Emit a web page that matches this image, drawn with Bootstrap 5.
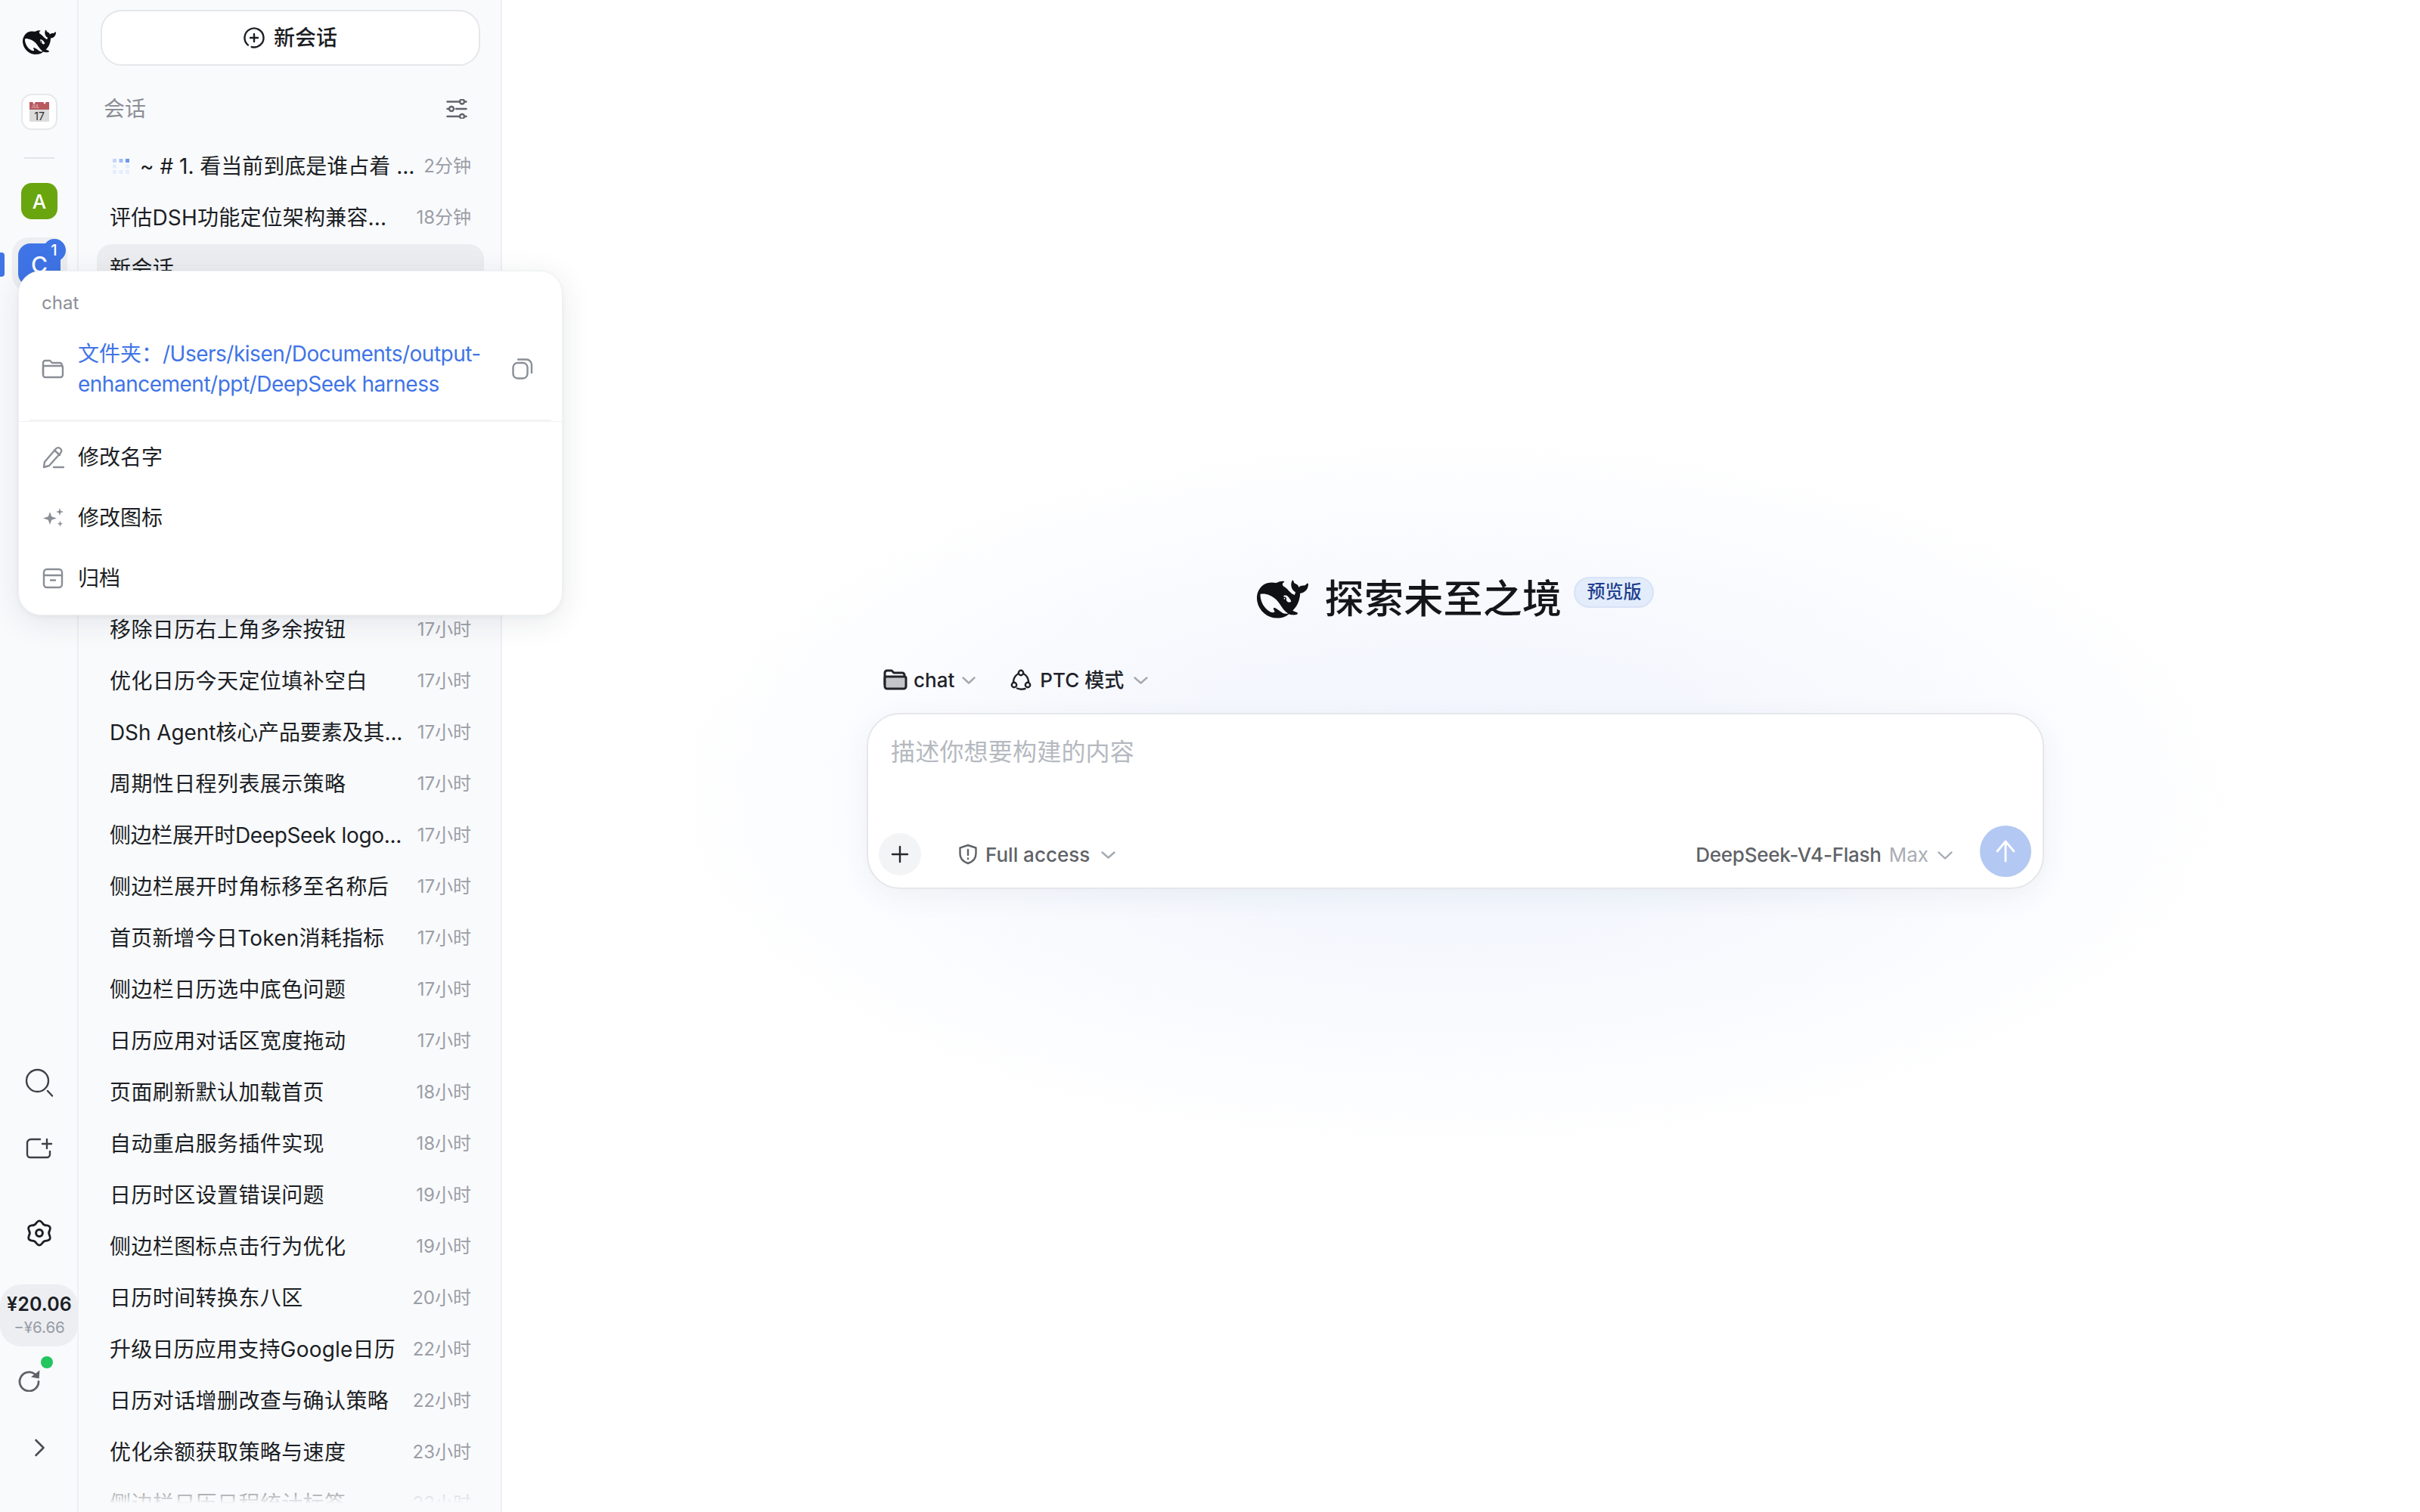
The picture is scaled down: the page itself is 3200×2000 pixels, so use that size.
<!DOCTYPE html>
<html lang="zh-CN">
<head>
<meta charset="utf-8">
<title>DeepSeek</title>
<link href="https://cdn.jsdelivr.net/npm/bootstrap@5.3.0/dist/css/bootstrap.min.css" rel="stylesheet">
<style>
html,body{height:100%;margin:0;overflow:hidden;background:#fff;}
body{font-family:Inter,"Noto Sans CJK SC",sans-serif;color:#1b1e24;font-size:28px;}
.app{height:2000px;width:3200px;position:relative;}
svg{display:block;flex:none;}
.ic{fill:none;stroke:currentColor;stroke-width:2.4;stroke-linecap:round;stroke-linejoin:round;}

/* rail */
.rail{width:104px;flex:none;background:#f9fafc;border-right:2px solid #eef0f3;padding:34px 0 73px 2px;}
.rail-cal{width:48px;height:48px;margin-top:46px;background:#fff;border:2px solid #e7e8ea;border-radius:14px;}
.rail-sep{width:40px;height:2px;margin-top:36px;background:#e4e5e8;}
.tile{width:48px;height:48px;border-radius:14px;color:#fff;font-weight:500;font-size:26px;}
.tile-a{margin-top:32px;background:#69a50f;}
.tile-c{width:56px;height:56px;background:#3f74e6;font-size:30px;border-radius:16px;}
.rail-active{width:73px;height:72px;margin-top:24px;background:#eceef1;border-radius:22px;position:relative;}
.rail-bar{position:absolute;left:-16px;top:20px;width:6px;height:32px;background:#3f74e6;border-radius:0 4px 4px 0;}
.rail-badge{position:absolute;left:41px;top:2px;width:30px;height:30px;border-radius:50%;background:#3f74e6;color:#fff;font-size:20px;padding:0;font-weight:500;line-height:1;}
.rail-ic{color:#3c4047;}
.rail-gear{color:#1b1e24;margin-top:80px;}
.rail-add{margin-top:54px;}
.rail-bal{width:103px;height:82px;margin:50px 0 0 -2px;padding-left:2px;background:#eceef2;border-radius:28px;line-height:1;}
.bal-main{font-size:25px;font-weight:600;letter-spacing:.1px;color:#1b1e24;}
.bal-sub{font-size:20.500px;color:#989ca5;margin-top:8px;}
.rail-refresh{position:relative;align-self:flex-start;margin:30px 0 0 22px;color:#5f6368;}
.rail-dot{position:absolute;left:30px;top:-17px;width:16px;height:16px;background:#22c55e;border-radius:50%;}
.rail-chev{margin-top:62px;color:#4a4e55;}

/* sidebar */
.side{width:560px;flex:none;background:#f9fafc;border-right:2px solid #eef0f3;padding:13px 22px 0 24px;position:relative;overflow:hidden;}
.new-chat{display:flex;align-items:center;justify-content:center;gap:12px;width:502px;height:74px;margin-left:5px;background:#fff;border:2px solid #e6e7ea;border-radius:28px;font-size:28px;font-weight:500;color:#1b1e24;padding:0;}
.side-head{height:40px;margin:37px 20px 24px 9px;color:#8c8f97;font-size:28px;line-height:40px;}
.side-head svg{color:#60646b;margin-right:2px;}
.chats{display:flex;flex-direction:column;gap:4px;margin:0;padding:0;width:512px;background:transparent;border-radius:0;}
.chat-row{display:flex;align-items:center;justify-content:space-between;height:64px;padding:0 17px 0 17px;border:0;background:transparent;border-radius:20px;color:#1b1e24;font-size:28px;letter-spacing:.4px;white-space:nowrap;}
.chat-row.ls-a{letter-spacing:.2px;}
.chat-row.ls-b{letter-spacing:-.1px;}
.chat-row.ls-c{letter-spacing:-.35px;}
.chat-row.active{background:#ecedf0;color:#1b1e24;z-index:0;}
.chat-t{font-size:24px;color:#9b9ea6;letter-spacing:0;}
.chat-run{display:flex;align-items:center;gap:14px;margin-left:4px;letter-spacing:0;}
.chats-gap{height:406px;flex:none;}
.side-fade{position:absolute;left:0;right:0;bottom:0;height:47px;background:linear-gradient(to bottom,rgba(249,250,252,0),#f9fafc 76%);}

/* popover */
.pop{position:absolute;left:24px;top:358px;width:720px;height:456px;background:#fff;border:1px solid #eff0f2;border-radius:30px;box-shadow:0 8px 40px rgba(30,40,60,.10),0 2px 6px rgba(30,40,60,.04);z-index:5;}
.pop-title{padding:30px 0 0 30px;height:62px;font-size:24px;line-height:24px;color:#8b8f97;}
.pop-path{display:flex;align-items:center;height:134px;padding:0 0 0 30px;margin:0 14px 0 0;}
.pop-path-t{width:540px;margin:0 0 0 18px;color:#3f74e6;font-size:28px;line-height:40px;white-space:nowrap;}
.pop-path-t .lat{letter-spacing:-.5px;}
.pop-path svg{color:#8a8e96;}
.pop-path .pop-copy{margin-left:34px;}
.pop-sep{height:2px;margin:0 14px;background:#f3f4f6;}
.pop-menu{border-radius:0;background:transparent;padding-top:7px;}
.pop-item{display:flex;align-items:center;height:80px;padding:0 0 0 30px;border:0;background:transparent;color:#1b1e24;font-size:28px;gap:18px;}
.pop-item svg{color:#8a8e96;}

/* main */
.main{flex:1 1 auto;padding:0 15px 0 0;background:radial-gradient(ellipse 1060px 480px at 1256px 1050px,#f3f6fd 0%,#f4f7fd 38%,rgba(247,249,254,.7) 68%,rgba(255,255,255,0) 100%);}
.hero{height:60px;margin-top:763px;gap:22px;}
.hero-t{font-size:52px;font-weight:500;line-height:60px;color:#14161a;letter-spacing:.3px;}
.hero-b{margin:-20px 0 0 -6px;height:41px;width:106px;background:#e3ecfb;border:2px solid #d8e3f6;color:#1f3f8f;font-size:24px;font-weight:500;padding:0;border-radius:21px;line-height:1;}
.sel-row{width:1557px;height:40px;margin-top:56px;padding-left:22px;font-size:26px;font-weight:500;color:#1f2329;}
.composer{width:1557px;height:233px;margin-top:24px;background:#fff;border:2px solid #e6e7ea;border-radius:44px;box-shadow:0 10px 36px rgba(40,60,110,.06);padding:28px 15px 14px 14px;}
.ph{margin-left:16px;font-size:32px;line-height:44px;color:#b5b9c0;letter-spacing:.2px;}
.plus{width:56px;height:56px;margin-bottom:2px;background:#f3f4f6;border-radius:50%;color:#24272c;}
.acc{font-size:26px;font-weight:500;color:#5f6368;margin:0 0 2px 49px;height:56px;}
.model{font-size:26px;font-weight:500;color:#5f6368;margin:0 36px 2px auto;height:56px;}
.model .mname{letter-spacing:-.25px;}
.model .max{color:#a9adb5;margin-left:10px;font-weight:400;}
.chev{color:#a5a9b0;}
.send{width:68px;height:68px;padding:0;border:0;border-radius:50%;background:#b3c8f2;color:#fff;}
</style>
</head>
<body>
<div class="app d-flex">

  <!-- icon rail -->
  <nav class="rail d-flex flex-column align-items-center">
    <svg width="44" height="44" viewBox="0 0 24 24" fill="#0f1115"><path d="M23.748 4.482c-.254-.124-.364.113-.512.234-.051.039-.094.09-.137.136-.372.397-.806.657-1.373.626-.829-.046-1.537.214-2.163.848-.133-.782-.575-1.248-1.247-1.548-.352-.156-.708-.311-.955-.65-.172-.241-.219-.51-.305-.774-.055-.16-.11-.323-.293-.35-.2-.031-.278.136-.356.276-.313.572-.434 1.202-.422 1.84.027 1.436.633 2.58 1.838 3.393.137.093.172.187.129.323-.082.28-.18.552-.266.833-.055.179-.137.217-.329.14a5.526 5.526 0 01-1.736-1.18c-.857-.828-1.631-1.742-2.597-2.458a11.365 11.365 0 00-.689-.471c-.985-.957.13-1.743.388-1.836.27-.098.093-.432-.779-.428-.872.004-1.67.295-2.687.684a3.055 3.055 0 01-.465.137 9.597 9.597 0 00-2.883-.102c-1.885.21-3.39 1.102-4.497 2.623C.082 8.606-.231 10.684.152 12.85c.403 2.284 1.569 4.175 3.36 5.653 1.858 1.533 3.997 2.284 6.438 2.14 1.482-.085 3.133-.284 4.994-1.86.47.234.962.327 1.78.397.63.059 1.236-.03 1.705-.128.735-.156.684-.837.419-.961-2.155-1.004-1.682-.595-2.113-.926 1.096-1.296 2.746-2.642 3.392-7.003.05-.347.007-.565 0-.845-.004-.17.035-.237.23-.256a4.173 4.173 0 001.545-.475c1.396-.763 1.96-2.015 2.093-3.517.02-.23-.004-.467-.247-.588zM11.581 18c-2.089-1.642-3.102-2.183-3.52-2.16-.392.024-.321.471-.235.763.09.288.207.486.371.739.114.167.192.416-.113.603-.673.416-1.842-.14-1.897-.167-1.361-.802-2.5-1.86-3.301-3.307-.774-1.393-1.224-2.887-1.298-4.482-.02-.386.093-.522.477-.592a4.696 4.696 0 011.529-.039c2.132.312 3.946 1.265 5.468 2.774.868.86 1.525 1.887 2.202 2.891.72 1.066 1.494 2.082 2.48 2.914.348.292.625.514.891.677-.802.09-2.14.11-3.054-.614zm1-6.44a.306.306 0 01.415-.287.302.302 0 01.2.288.306.306 0 01-.31.307.303.303 0 01-.304-.308zm3.11 1.596c-.2.081-.399.151-.59.16a1.245 1.245 0 01-.798-.254c-.274-.23-.47-.358-.552-.758a1.73 1.73 0 01.016-.588c.07-.327-.008-.537-.239-.727-.187-.156-.426-.199-.688-.199a.559.559 0 01-.254-.078c-.11-.054-.2-.19-.114-.358.028-.054.16-.186.192-.21.356-.202.767-.136 1.146.016.352.144.618.408 1.001.782.391.451.462.576.685.914.176.265.336.537.445.848.067.195-.019.354-.25.452z"/></svg>

    <div class="rail-cal d-flex align-items-center justify-content-center">
      <svg width="26" height="26" viewBox="0 0 26 26"><rect width="26" height="26" fill="#dcdcdc"/><rect width="26" height="10" fill="#b75a5f"/><circle cx="6" cy="1" r="1.4" fill="#fff"/><circle cx="20" cy="1" r="1.4" fill="#fff"/><text x="2.5" y="8" font-family="Inter" font-size="5.5" fill="#eed3d4">JUL</text><text x="13" y="23.5" text-anchor="middle" font-family="Inter" font-size="14" fill="#2b2b2b">17</text></svg>
    </div>
    <div class="rail-sep"></div>
    <div class="tile tile-a d-flex align-items-center justify-content-center">A</div>
    <div class="rail-active d-flex align-items-center justify-content-center">
      <span class="rail-bar"></span>
      <div class="tile tile-c d-flex align-items-center justify-content-center">C</div>
      <span class="badge rail-badge d-flex align-items-center justify-content-center">1</span>
    </div>

    <svg class="mt-auto ic rail-ic" width="38" height="38" viewBox="0 0 38 38"><circle cx="16.5" cy="16.5" r="14.5"/><path d="M30 30l6 6.5"/></svg>
    <svg class="rail-add ic rail-ic" width="36" height="28" viewBox="0 0 36 28"><path d="M19 2H7a5 5 0 0 0-5 5v15a4 4 0 0 0 4 4h22a4 4 0 0 0 4-4v-4"/><path d="M22 8h12M28 2v12"/></svg>
    <svg class="rail-gear ic" width="34" height="36" viewBox="0 0 34 36" style="stroke-width:2.8"><path d="M20.69 4.24Q22.75 8.04 27.08 7.92Q33.02 8.75 30.76 14.31Q28.5 18 30.76 21.69Q33.02 27.25 27.08 28.08Q22.75 27.96 20.69 31.76Q17 36.5 13.31 31.76Q11.25 27.96 6.92 28.08Q.98 27.25 3.24 21.69Q5.5 18 3.24 14.31Q.98 8.75 6.92 7.92Q11.25 8.04 13.31 4.24Q17 -.5 20.69 4.24Z"/><circle cx="17" cy="18" r="4.4" style="stroke-width:3"/></svg>
    <div class="rail-bal d-flex flex-column align-items-center justify-content-center">
      <div class="bal-main">¥20.06</div>
      <div class="bal-sub">−¥6.66</div>
    </div>
    <div class="rail-refresh">
      <svg class="ic" width="30" height="30" viewBox="0 0 30 30" style="stroke-width:2.8"><path d="M27 16.500a12.500 12.500 0 1 1-5-10"/><path d="M28.500 1.500l-.8 11-10.700-2z" fill="currentColor" stroke="none"/></svg>
      <span class="rail-dot"></span>
    </div>
    <svg class="rail-chev ic" width="15" height="24" viewBox="0 0 15 24" style="stroke-width:2.6"><path d="M2.5 2l10 10-10 10"/></svg>
  </nav>

  <!-- conversation list -->
  <aside class="side">
    <button type="button" class="btn new-chat">
      <svg class="ic" width="28" height="28" viewBox="0 0 28 28"><path d="M5.970 23.580A12.500 12.500 0 1 1 10.760 26.070"/><path d="M14 9v10M9 14h10"/></svg>
      新会话
    </button>
    <div class="side-head d-flex align-items-center justify-content-between">
      <span>会话</span>
      <svg class="ic" width="28" height="26" viewBox="0 0 28 26"><path d="M1.500 3.500h16.500M24.500 3.500h2M1.500 23h16.500M24.500 23h2M13 13h13.500M1.500 13h2"/><circle cx="21" cy="3.500" r="3"/><circle cx="7" cy="13" r="3"/><circle cx="21" cy="23" r="3"/></svg>
    </div>
    <ul class="list-group chats">
      <li class="list-group-item chat-row">
        <span class="chat-run">
          <svg width="22" height="20" viewBox="0 0 22 20"><rect x="0" y="0" width="5" height="5" fill="#c5d5f8"/><rect x="8.500" y="0" width="5" height="5" fill="#a3bcf4"/><rect x="17" y="0" width="5" height="5" fill="#6e96ee"/><rect x="0" y="7.500" width="5" height="5" fill="#e6edfc"/><rect x="17" y="7.500" width="5" height="5" fill="#e6edfc"/><rect x="0" y="15" width="5" height="5" fill="#e6edfc"/><rect x="8.500" y="15" width="5" height="5" fill="#e6edfc"/><rect x="17" y="15" width="5" height="5" fill="#e6edfc"/></svg>
          <span>~ # 1. 看当前到底是谁占着 ...</span>
        </span>
        <span class="chat-t">2分钟</span>
      </li>
      <li class="list-group-item chat-row ls-a"><span>评估DSH功能定位架构兼容...</span><span class="chat-t">18分钟</span></li>
      <li class="list-group-item chat-row active"><span>新会话</span></li>
      <li class="chats-gap list-unstyled"></li>
      <li class="list-group-item chat-row"><span>移除日历右上角多余按钮</span><span class="chat-t">17小时</span></li>
      <li class="list-group-item chat-row"><span>优化日历今天定位填补空白</span><span class="chat-t">17小时</span></li>
      <li class="list-group-item chat-row ls-b"><span>DSh Agent核心产品要素及其...</span><span class="chat-t">17小时</span></li>
      <li class="list-group-item chat-row"><span>周期性日程列表展示策略</span><span class="chat-t">17小时</span></li>
      <li class="list-group-item chat-row ls-c"><span>侧边栏展开时DeepSeek logo...</span><span class="chat-t">17小时</span></li>
      <li class="list-group-item chat-row"><span>侧边栏展开时角标移至名称后</span><span class="chat-t">17小时</span></li>
      <li class="list-group-item chat-row ls-a"><span>首页新增今日Token消耗指标</span><span class="chat-t">17小时</span></li>
      <li class="list-group-item chat-row"><span>侧边栏日历选中底色问题</span><span class="chat-t">17小时</span></li>
      <li class="list-group-item chat-row"><span>日历应用对话区宽度拖动</span><span class="chat-t">17小时</span></li>
      <li class="list-group-item chat-row"><span>页面刷新默认加载首页</span><span class="chat-t">18小时</span></li>
      <li class="list-group-item chat-row"><span>自动重启服务插件实现</span><span class="chat-t">18小时</span></li>
      <li class="list-group-item chat-row"><span>日历时区设置错误问题</span><span class="chat-t">19小时</span></li>
      <li class="list-group-item chat-row"><span>侧边栏图标点击行为优化</span><span class="chat-t">19小时</span></li>
      <li class="list-group-item chat-row"><span>日历时间转换东八区</span><span class="chat-t">20小时</span></li>
      <li class="list-group-item chat-row ls-a"><span>升级日历应用支持Google日历</span><span class="chat-t">22小时</span></li>
      <li class="list-group-item chat-row"><span>日历对话增删改查与确认策略</span><span class="chat-t">22小时</span></li>
      <li class="list-group-item chat-row"><span>优化余额获取策略与速度</span><span class="chat-t">23小时</span></li>
      <li class="list-group-item chat-row"><span>侧边栏日历日程统计标签</span><span class="chat-t">23小时</span></li>
    </ul>
    <div class="side-fade"></div>
  </aside>

  <!-- main -->
  <main class="main d-flex flex-column align-items-center">
    <div class="hero d-flex align-items-center">
      <svg width="68" height="68" viewBox="0 0 24 24" fill="#0f1115"><path d="M23.748 4.482c-.254-.124-.364.113-.512.234-.051.039-.094.09-.137.136-.372.397-.806.657-1.373.626-.829-.046-1.537.214-2.163.848-.133-.782-.575-1.248-1.247-1.548-.352-.156-.708-.311-.955-.65-.172-.241-.219-.51-.305-.774-.055-.16-.11-.323-.293-.35-.2-.031-.278.136-.356.276-.313.572-.434 1.202-.422 1.84.027 1.436.633 2.58 1.838 3.393.137.093.172.187.129.323-.082.28-.18.552-.266.833-.055.179-.137.217-.329.14a5.526 5.526 0 01-1.736-1.18c-.857-.828-1.631-1.742-2.597-2.458a11.365 11.365 0 00-.689-.471c-.985-.957.13-1.743.388-1.836.27-.098.093-.432-.779-.428-.872.004-1.67.295-2.687.684a3.055 3.055 0 01-.465.137 9.597 9.597 0 00-2.883-.102c-1.885.21-3.39 1.102-4.497 2.623C.082 8.606-.231 10.684.152 12.85c.403 2.284 1.569 4.175 3.36 5.653 1.858 1.533 3.997 2.284 6.438 2.14 1.482-.085 3.133-.284 4.994-1.86.47.234.962.327 1.78.397.63.059 1.236-.03 1.705-.128.735-.156.684-.837.419-.961-2.155-1.004-1.682-.595-2.113-.926 1.096-1.296 2.746-2.642 3.392-7.003.05-.347.007-.565 0-.845-.004-.17.035-.237.23-.256a4.173 4.173 0 001.545-.475c1.396-.763 1.96-2.015 2.093-3.517.02-.23-.004-.467-.247-.588zM11.581 18c-2.089-1.642-3.102-2.183-3.52-2.16-.392.024-.321.471-.235.763.09.288.207.486.371.739.114.167.192.416-.113.603-.673.416-1.842-.14-1.897-.167-1.361-.802-2.5-1.86-3.301-3.307-.774-1.393-1.224-2.887-1.298-4.482-.02-.386.093-.522.477-.592a4.696 4.696 0 011.529-.039c2.132.312 3.946 1.265 5.468 2.774.868.86 1.525 1.887 2.202 2.891.72 1.066 1.494 2.082 2.48 2.914.348.292.625.514.891.677-.802.09-2.14.11-3.054-.614zm1-6.44a.306.306 0 01.415-.287.302.302 0 01.2.288.306.306 0 01-.31.307.303.303 0 01-.304-.308zm3.11 1.596c-.2.081-.399.151-.59.16a1.245 1.245 0 01-.798-.254c-.274-.23-.47-.358-.552-.758a1.73 1.73 0 01.016-.588c.07-.327-.008-.537-.239-.727-.187-.156-.426-.199-.688-.199a.559.559 0 01-.254-.078c-.11-.054-.2-.19-.114-.358.028-.054.16-.186.192-.21.356-.202.767-.136 1.146.016.352.144.618.408 1.001.782.391.451.462.576.685.914.176.265.336.537.445.848.067.195-.019.354-.25.452z"/></svg>
      <div class="hero-t">探索未至之境</div>
      <span class="badge hero-b d-flex align-items-center justify-content-center">预览版</span>
    </div>

    <div class="sel-row d-flex align-items-center">
      <svg class="ic me-2" width="32" height="28" viewBox="0 0 32 28" style="stroke-width:3"><path d="M2 20V5a3 3 0 0 1 3-3h6l3 3h11a3 3 0 0 1 3 3v2"/><path d="M2 12a2 2 0 0 1 2-2h24a2 2 0 0 1 2 2v11a3 3 0 0 1-3 3H5a3 3 0 0 1-3-3z" fill="#c4c5c9"/></svg>
      <span>chat</span>
      <svg class="ic chev" style="margin:2px 0 0 10px" width="18" height="10" viewBox="0 0 18 10"><path d="M1.500 1.500L9 8.500l7.500-7"/></svg>
      <svg class="ic" style="margin-left:46px" width="28" height="28" viewBox="0 0 28 28"><circle cx="14" cy="5" r="3.200"/><circle cx="5" cy="21" r="3.200"/><circle cx="23" cy="21" r="3.200"/><path d="M4 16.500C4.500 12 6.500 8.500 10 6.500M18 6.500c3.500 2 5.500 5.500 6 10M9 25.500c3.500 1.500 7 1.500 10.500.5"/></svg>
      <span style="margin-left:11px">PTC 模式</span>
      <svg class="ic chev" style="margin:2px 0 0 13px" width="19" height="10" viewBox="0 0 19 10"><path d="M1.500 1.500L9.500 8.500l8-7"/></svg>
    </div>

    <div class="card composer d-flex flex-column justify-content-between">
      <div class="ph">描述你想要构建的内容</div>
      <div class="d-flex align-items-end">
        <div class="plus d-flex align-items-center justify-content-center">
          <svg class="ic" width="24" height="24" viewBox="0 0 24 24"><path d="M12 2v20M2 12h20"/></svg>
        </div>
        <div class="acc d-flex align-items-center">
          <svg class="ic" style="margin-right:10px" width="26" height="28" viewBox="0 0 26 28"><path d="M13 2l10.500 3.500V13c0 6.500-4.500 11-10.500 13C7 24 2.500 19.500 2.500 13V5.500z"/><path d="M13 8v7M13 19.500v.5"/></svg>
          <span>Full access</span>
          <svg class="ic chev" style="margin:2px 0 0 15px" width="19" height="10" viewBox="0 0 19 10"><path d="M1.500 1.500L9.500 8.500l8-7"/></svg>
        </div>
        <div class="model d-flex align-items-center">
          <span class="mname">DeepSeek-V4-Flash</span><span class="max">Max</span>
          <svg class="ic chev" style="margin:2px 0 0 12px" width="20" height="11" viewBox="0 0 20 11"><path d="M1.500 1.500L10 9.500l8.500-8"/></svg>
        </div>
        <button type="button" class="btn send d-flex align-items-center justify-content-center">
          <svg class="ic" width="28" height="30" viewBox="0 0 28 30" style="stroke-width:2.8"><path d="M14 28V2M3 15L14 2l11 13"/></svg>
        </button>
      </div>
    </div>
  </main>

  <!-- folder menu over the list -->
  <div class="card pop">
    <div class="pop-title">chat</div>
    <div class="pop-path">
      <svg class="ic" width="30" height="26" viewBox="0 0 30 26"><path d="M2 20V5a3 3 0 0 1 3-3h6l3 3h10a3 3 0 0 1 3 3v1"/><path d="M2 11a2 2 0 0 1 2-2h22a2 2 0 0 1 2 2v10a3 3 0 0 1-3 3H5a3 3 0 0 1-3-3z"/></svg>
      <div class="pop-path-t">文件夹：<span class="lat">/Users/kisen/Documents/output-<br>enhancement/ppt/DeepSeek harness</span></div>
      <svg class="ic pop-copy" width="28" height="28" viewBox="0 0 28 28"><rect x="1.500" y="6" width="19" height="20.500" rx="6"/><path d="M8 1.500h11a7 7 0 0 1 7 7V19"/></svg>
    </div>
    <div class="pop-sep"></div>
    <div class="list-group pop-menu">
      <div class="list-group-item pop-item">
        <svg class="ic" width="30" height="30" viewBox="0 0 30 30"><path d="M3 28l1-7L19 3.500c1.800-1.800 4.300-1.600 6 0 1.700 1.700 1.700 4 0 5.700L10 26z"/><path d="M17 5.500l7 6.500M16 28h13"/></svg>
        <span>修改名字</span>
      </div>
      <div class="list-group-item pop-item">
        <svg width="30" height="30" viewBox="0 0 30 30" fill="currentColor"><path d="M11 7l2.200 6.300L20 15.500l-6.800 2.200L11 24l-2.200-6.300L2 15.500l6.800-2.200z"/><path d="M24 2l1.200 3.800L29 7l-3.800 1.200L24 12l-1.200-3.800L19 7l3.800-1.200z"/><path d="M24.500 19l1 2.800 2.500 1-2.500 1-1 3-1-3-2.500-1 2.500-1z"/></svg>
        <span>修改图标</span>
      </div>
      <div class="list-group-item pop-item">
        <svg class="ic" width="30" height="28" viewBox="0 0 30 28"><rect x="3" y="2" width="24" height="24" rx="4"/><path d="M3 10h24M12 16.500h6"/></svg>
        <span>归档</span>
      </div>
    </div>
  </div>

</div>
<script src="https://cdn.jsdelivr.net/npm/bootstrap@5.3.0/dist/js/bootstrap.bundle.min.js"></script>
</body>
</html>
